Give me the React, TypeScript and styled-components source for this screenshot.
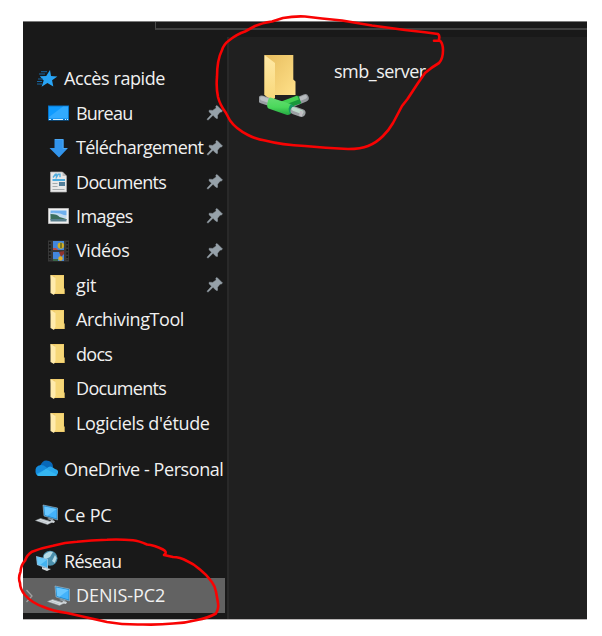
import React from "react";
import styled, { createGlobalStyle } from "styled-components";

const GlobalStyle = createGlobalStyle`
  body { margin: 0; background: #fff; }
  * { box-sizing: border-box; }
`;

const Page = styled.div`
  position: relative;
  width: 602px;
  height: 636px;
  padding: 21px 15px 16px 23px;
  background: #fff;
  font-family: "Open Sans", "Noto Sans", sans-serif;
  overflow: hidden;
`;

const Window = styled.main`
  display: flex;
  flex-direction: column;
  height: 599px;
  background: #191919;
  border-top: 1px solid #7b7b7b;
  border-bottom: 1px solid #b9b6b6;
`;

const TopBar = styled.div`
  height: 15px;
  padding-left: 132px;
`;

const AddressBox = styled.div`
  height: 8px;
  border-left: 1px solid #4a4a4a;
  border-bottom: 2px solid #404040;
`;

const Body = styled.div`
  display: flex;
  flex: 1;
  min-height: 0;
`;

const Sidebar = styled.nav`
  display: flex;
  flex-direction: column;
  gap: 11.6px;
  width: 204px;
  padding-top: 24.5px;
`;

const Group = styled.div`
  display: flex;
  flex-direction: column;
`;

const Row = styled.div<{ $child?: boolean; $selected?: boolean }>`
  display: flex;
  align-items: center;
  height: 34.45px;
  width: 202px;
  padding-left: ${(p) => (p.$child ? (p.$selected ? 0 : 23) : 11)}px;
  background: ${(p) => (p.$selected ? "#626262" : "transparent")};
`;

const IconSlot = styled.span`
  display: flex;
  flex: none;
  width: 24px;
  height: 24px;
`;

const Label = styled.span<{ $track: number }>`
  flex: 1;
  min-width: 0;
  margin-left: 6px;
  margin-top: -1px;
  color: #f1f1f1;
  font-size: 18px;
  line-height: 26px;
  white-space: nowrap;
  letter-spacing: ${(p) => p.$track}px;
`;

const PinSlot = styled.span`
  display: flex;
  flex: none;
  width: 18px;
  height: 18px;
  margin-right: 1px;
`;

const ChevronSlot = styled.span`
  display: flex;
  flex: none;
  width: 23px;
`;

const Content = styled.section`
  flex: 1;
  padding: 14px 0 0 30px;
  border-left: 2px solid #292929;
  background: #202020;
`;

const FileItem = styled.div`
  display: flex;
  align-items: flex-start;
`;

const FileName = styled(Label)`
  flex: none;
  margin: 7px 0 0 19px;
`;

const Ink = styled.svg`
  position: absolute;
  inset: 0;
  pointer-events: none;
`;

const Svg = ({ children }: { children: React.ReactNode }) => (
  <svg width="24" height="24" viewBox="0 0 24 24">{children}</svg>
);

const Pin = () => (
  <svg width="18" height="18" viewBox="0 0 18 18">
    <path d="M11 1.5 16.5 7 15 8.2 14.2 7.9 11.5 11.2 11.5 14.4 10 14.3 7 11.3 2.4 15.8 1.2 15.8 1.3 14.9 5.6 10.2 3 7.7 3.3 6.2 6.7 6.4 10.2 3.9 9.8 2.3Z" fill="#96a1a9" stroke="#96a1a9" strokeWidth=".5" />
  </svg>
);

const Star = () => (
  <Svg>
    <path d="M16 3 17 9 23.4 9.5 18.1 13.2 19.3 19.6 13.4 16 7.6 19.8 9.7 13.5 5.8 9.3 12.2 9Z" fill="#28a4f5" />
    <path d="M7 4.7h6M5 7h6M4 12h5M3 14.5h5M3 17h5" stroke="#1766a2" strokeWidth="1" />
  </Svg>
);

const Desktop = () => (
  <Svg>
    <path d="M2 4.5h21v15H2z" fill="#0875c9" />
    <path d="M3 5.5h19v12H3z" fill="#109bff" />
    <path d="m3 16 14-10.5h5v12H3z" fill="#31aaff" />
    <path d="M3 18.5h2m2 0h10m2 0h1m1 0h1" stroke="#d5efff" strokeWidth="1" />
  </Svg>
);

const Download = () => (
  <Svg>
    <path d="M8.5 3h9v9h4.5L13 21.5 3.5 12h5z" fill="#3294eb" />
    <path d="M9 3.5h8v9h4" fill="none" stroke="#4ba6f2" />
  </Svg>
);

const DocumentIcon = () => (
  <Svg>
    <path d="M4.5 2h12l4 4v16h-16z" fill="#e8e8e8" stroke="#aaa" strokeWidth=".7" />
    <path d="M16.5 2v4h4z" fill="#bbb" />
    <path d="m7 7.5 2.4-3.2h1v3l1.8-3h1.8v3" fill="none" stroke="#53aede" strokeWidth="1.4" />
    <path d="M6.5 10h12.5" stroke="#1998db" strokeWidth="1.5" />
    <path d="M6.5 13.5h5M6.5 16.5h5M6.5 19.5h12" stroke="#a5abad" strokeWidth="1" />
    <path d="M13 12h6v4h-6z" fill="#527e99" />
  </Svg>
);

const Picture = () => (
  <Svg>
    <path d="M2.5 4.5h20v15h-20z" fill="#f0f0f0" stroke="#b5b5b5" />
    <path d="M4.5 6.5h16v5h-16z" fill="#6fb0ed" />
    <path d="M4.5 9q8-1 16 3v2h-16z" fill="#c4dcf0" />
    <path d="M4.5 10q7 0 9 3l7 2v1h-16z" fill="#3b6e5b" />
    <path d="M4.5 15h16v2.5h-16z" fill="#587f8d" />
  </Svg>
);

const Video = () => (
  <Svg>
    <path d="M2 1.5h21v21H2z" fill="#383838" />
    <path d="M3.8 3v18M21.2 3v18" stroke="#151515" strokeWidth="1.7" strokeDasharray="2 1.5" />
    <path d="M7 2h11v9H7zm0 11h11v9H7z" fill="#4386dc" />
    <circle cx="14.8" cy="6.6" r="3.2" fill="#d2ae22" />
    <path d="M14 4h2v5h-2z" fill="#7b7820" />
    <path d="M7 9h3l2 2H7z" fill="#bd4944" />
    <path d="m13 13 5-1v3l-3 3z" fill="#8e332d" />
    <circle cx="14.5" cy="19.5" r="2.2" fill="#e1b025" />
    <path d="M7 20h5v2H7z" fill="#3b6848" />
  </Svg>
);

const FolderIcon = () => (
  <Svg>
    <path d="M4.5 2H18v13l.7 1v5H6.5z" fill="#f1cd6c" />
    <path d="M9 3h8.3v12.7l.7 1V20H9z" fill="#f6d778" />
    <path d="M4.5 2 9.5 5v13.5L8 22l-3.5-2z" fill="#ffebac" />
  </Svg>
);

const Cloud = () => (
  <Svg>
    <path d="M6 9Q9 1.5 15 4q4 1.5 4 6l-7 4-7-1z" fill="#0868b8" />
    <path d="M1.5 15q-1-6 5.5-7 3 0 5 2l7 6-10 3H6q-4 0-4.5-4z" fill="#148bdc" />
    <path d="M12 12q4-5 9 0 4 1 3 4-1 3-4 3H6q-3 0-3.5-2z" fill="#29a8ed" />
    <path d="m12 12 11.5 6q-1 1-3.5 1H6q-2 0-3-1z" fill="#35b7f2" />
  </Svg>
);

const Computer = () => (
  <Svg>
    <path d="m9 2 14.5 3v12L10 13z" fill="#2187c8" stroke="#a7c0cf" strokeWidth=".6" />
    <path d="m10.4 3.5 12.2 2.4v9.5L11 12z" fill="#43b2fb" />
    <path d="m10.4 3.5 12.2 2.4-9.1 6.8-2.5-.7z" fill="#69c7ff" />
    <path d="m15 15 4 1 1 2-4-1-3-1z" fill="#8e9ba3" />
    <path d="m1.5 17.5 5-2 12 3.5-5 2.5z" fill="#dbe1e5" stroke="#929a9f" strokeWidth=".5" />
    <path d="m4.5 17 9 3m-6-4 9 3" stroke="#9ca4aa" strokeWidth=".5" />
    <path d="m17 17 4 1-1 2-4-1z" fill="#cfd4d7" />
  </Svg>
);

const Network = () => (
  <Svg>
    <circle cx="16" cy="9.2" r="7.5" fill="#4a8fac" />
    <path d="M10 6q5-5 9-3l-3 5-6 3zm11 0 1.7 3-2 5-2.7-2z" fill="#b5dae5" />
    <path d="m2 7 12 3v10L3 16z" fill="#89bee0" />
    <path d="m3 8.3 10 2.5v7.5L4 15z" fill="#43b2ef" />
    <path d="m3 8.3 10 2.5L6 16l-2-1z" fill="#69c9fa" />
    <path d="m8 18 4 1 5 1-4 2-5-2z" fill="#d3dadd" />
  </Svg>
);

const Chevron = () => (
  <svg width="14" height="20" viewBox="0 0 14 20">
    <path d="m3.5 4 5.5 6-5.5 6" fill="none" stroke="#a0a0a0" strokeWidth="1.3" />
  </svg>
);

const SharedFolder = () => (
  <svg width="56" height="70" viewBox="0 0 56 70">
    <defs>
      <linearGradient id="folder" x1="0" y1="0" x2="1" y2="1">
        <stop stopColor="#e7bd5e" /><stop offset="1" stopColor="#ffe18a" />
      </linearGradient>
      <linearGradient id="flap" x1="0" y1="0" x2="0" y2="1">
        <stop stopColor="#ffe9a6" /><stop offset="1" stopColor="#f8d778" />
      </linearGradient>
      <linearGradient id="pipe" x1="0" y1="0" x2="0" y2="1">
        <stop stopColor="#65dc72" /><stop offset=".55" stopColor="#4bd85b" /><stop offset="1" stopColor="#23a741" />
      </linearGradient>
    </defs>
    <path d="M5.5 4h28.8v24.5l2.2 2V44H5.5z" fill="url(#folder)" />
    <path d="m5.5 4 10.5 8v35L12.5 50l-7-6z" fill="url(#flap)" />
    <path d="m34 52 12-5" stroke="#92979b" strokeWidth="7.5" strokeLinecap="round" />
    <path d="m36 50 10-4" stroke="#b7bbbe" strokeWidth="4" strokeLinecap="round" />
    <path d="m24 54.5 17-6" stroke="#17983b" strokeWidth="8" />
    <path d="m23 52.5 16-6" stroke="#43d052" strokeWidth="4.5" />
    <path d="m3 48.5 9 3" stroke="#999ea2" strokeWidth="7.8" strokeLinecap="round" />
    <path d="m3 47.5 9 3" stroke="#bbc0c3" strokeWidth="4" strokeLinecap="round" />
    <path d="m11.5 46.5 20 6.5q4 2 1.5 7.5-2 4-5 3.5L9.5 57.5q-2-1-1-6 1-5 3-5z" fill="url(#pipe)" />
    <path d="M32 53q-4 4-1 10l5-7z" fill="#159864" />
    <path d="m35.5 59.5 7 2.5" stroke="#9ca1a4" strokeWidth="8" strokeLinecap="round" />
    <path d="m34.5 58 8 3" stroke="#bddacb" strokeWidth="4" strokeLinecap="round" />
    <path d="m42.5 60-1 5" stroke="#c1bec3" strokeWidth="3" />
  </svg>
);

type Item = { name: string; icon: React.ReactNode; track: number; child?: boolean; pinned?: boolean; selected?: boolean };

const groups: Item[][] = [
  [
    { name: "Accès rapide", icon: <Star />, track: -0.42 },
    { name: "Bureau", icon: <Desktop />, track: -0.8, child: true, pinned: true },
    { name: "Téléchargement", icon: <Download />, track: -0.6, child: true, pinned: true },
    { name: "Documents", icon: <DocumentIcon />, track: -0.68, child: true, pinned: true },
    { name: "Images", icon: <Picture />, track: -0.55, child: true, pinned: true },
    { name: "Vidéos", icon: <Video />, track: -0.4, child: true, pinned: true },
    { name: "git", icon: <FolderIcon />, track: -0.1, child: true, pinned: true },
    { name: "ArchivingTool", icon: <FolderIcon />, track: -0.42, child: true },
    { name: "docs", icon: <FolderIcon />, track: -0.7, child: true },
    { name: "Documents", icon: <FolderIcon />, track: -0.68, child: true },
    { name: "Logiciels d'étude", icon: <FolderIcon />, track: -0.33, child: true },
  ],
  [{ name: "OneDrive - Personal", icon: <Cloud />, track: -0.43 }],
  [{ name: "Ce PC", icon: <Computer />, track: -0.15 }],
  [
    { name: "Réseau", icon: <Network />, track: -0.6 },
    { name: "DENIS-PC2", icon: <Computer />, track: -0.05, child: true, selected: true },
  ],
];

export default function App() {
  return (
    <Page>
      <GlobalStyle />
      <Window>
        <TopBar><AddressBox /></TopBar>
        <Body>
          <Sidebar>
            {groups.map((group, i) => (
              <Group key={i}>
                {group.map((item, j) => (
                  <Row key={j} $child={item.child} $selected={item.selected}>
                    {item.selected && <ChevronSlot><Chevron /></ChevronSlot>}
                    <IconSlot>{item.icon}</IconSlot>
                    <Label $track={item.track}>{item.name}</Label>
                    {item.pinned && <PinSlot><Pin /></PinSlot>}
                  </Row>
                ))}
              </Group>
            ))}
          </Sidebar>
          <Content>
            <FileItem>
              <SharedFolder />
              <FileName $track={-0.5}>smb_server</FileName>
            </FileItem>
          </Content>
        </Body>
      </Window>
      <Ink width="602" height="636" viewBox="0 0 602 636" fill="none" stroke="#f80303" strokeWidth="2.6" strokeLinecap="round" strokeLinejoin="round">
        <path d="M434 40.7H440Q443 44 443 50Q443 59 439 63Q432 67 425 73L418 83L407.5 99L402 106L393 123Q389 130 383 136Q376 143 368 146Q361 149 348 149Q325 148 305 146Q282 145 265 140.5Q256 139 248 135Q236 129 230 120.5L225.7 112.5Q220 105 218 97Q216 87 217 77Q217 60 222 50Q224 44 229 40.5Q237 34 245 31.5L255 26Q262 23 272 21.5L283 18Q294 16 305 16.5L322 18.5L342 20.5L372 25.5L405 30L425 32.3L438 34Q440 36 439 39" />
        <path d="M164 555Q168 552 163 549.5Q154 545 147 544.5Q139 541 133 540.3Q120 539 107 539.7Q91 540 77 541.7Q65 542 53 545.7Q41 548 32 551.7Q27 555 25 560.7Q21 565 20.5 571.7Q18 578 20 583Q20 589 25 595Q32 603 43 606.7Q53 611 67 613L107 622Q124 625 143 624.5Q159 625 173 623.5Q186 623 197 620Q208 618 216 613.5Q219 608 218 603Q217 597 216 591.7Q215 586 211.7 581.7Q207 575 200 569.5Q194 564 187 561Q180 557 173 557L164 555" />
      </Ink>
    </Page>
  );
}
